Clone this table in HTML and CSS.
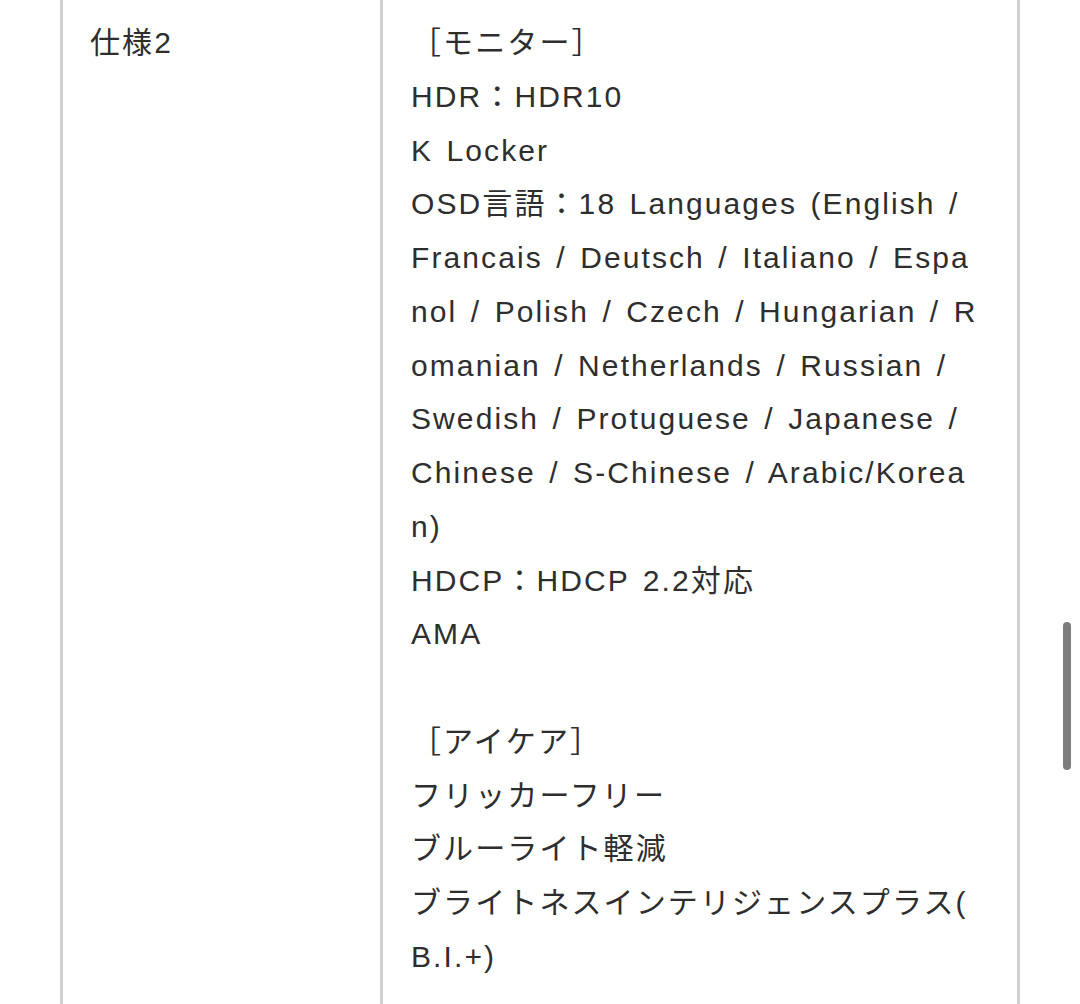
FILE: index.html
```html
<!DOCTYPE html>
<html lang="ja">
<head>
<meta charset="utf-8">
<link rel="stylesheet" href="styles.css">
</head>
<body>
<div class="spec">
  <div class="label">仕様2</div>
  <div class="value">［モニター］<br>HDR：HDR10<br>K Locker<br>OSD言語：18 Languages (English /<br>Francais / Deutsch / Italiano / Espa<br>nol / Polish / Czech / Hungarian / R<br>omanian / Netherlands / Russian /<br>Swedish / Protuguese / Japanese /<br>Chinese / S-Chinese / Arabic/Korea<br>n)<br>HDCP：HDCP 2.2対応<br>AMA<br><br>［アイケア］<br>フリッカーフリー<br>ブルーライト軽減<br>ブライトネスインテリジェンスプラス(<br>B.I.+)</div>
</div>
<div class="scrollbar"></div>
</body>
</html>
```

FILE: styles.css
```css
html, body {
  margin: 0;
  padding: 0;
  background: #ffffff;
  height: 1004px;
  overflow: hidden;
}
body {
  font-family: "Liberation Sans", "Noto Sans CJK JP", sans-serif;
  font-size: 30px;
  line-height: 53.75px;
  letter-spacing: 2.1px;
  word-spacing: 3px;
  color: #2e2e2e;
  text-spacing-trim: space-all;
}
.spec {
  display: flex;
  margin-left: 60px;
  width: 960px;
  height: 1004px;
  box-sizing: border-box;
  border-left: 3px solid #cfcfcf;
  border-right: 3px solid #cfcfcf;
}
.label {
  width: 320px;
  flex: none;
  box-sizing: border-box;
  padding: 16px 0 0 27px;
  border-right: 3px solid #cfcfcf;
}
.value {
  flex: 1;
  padding: 16px 0 0 28px;
  white-space: nowrap;
}
.scrollbar {
  position: absolute;
  left: 1063px;
  top: 622px;
  width: 8px;
  height: 148px;
  border-radius: 4px;
  background: #7d7d7d;
  box-shadow: 0 0 0 1px rgba(255,255,255,0.8);
}
```
